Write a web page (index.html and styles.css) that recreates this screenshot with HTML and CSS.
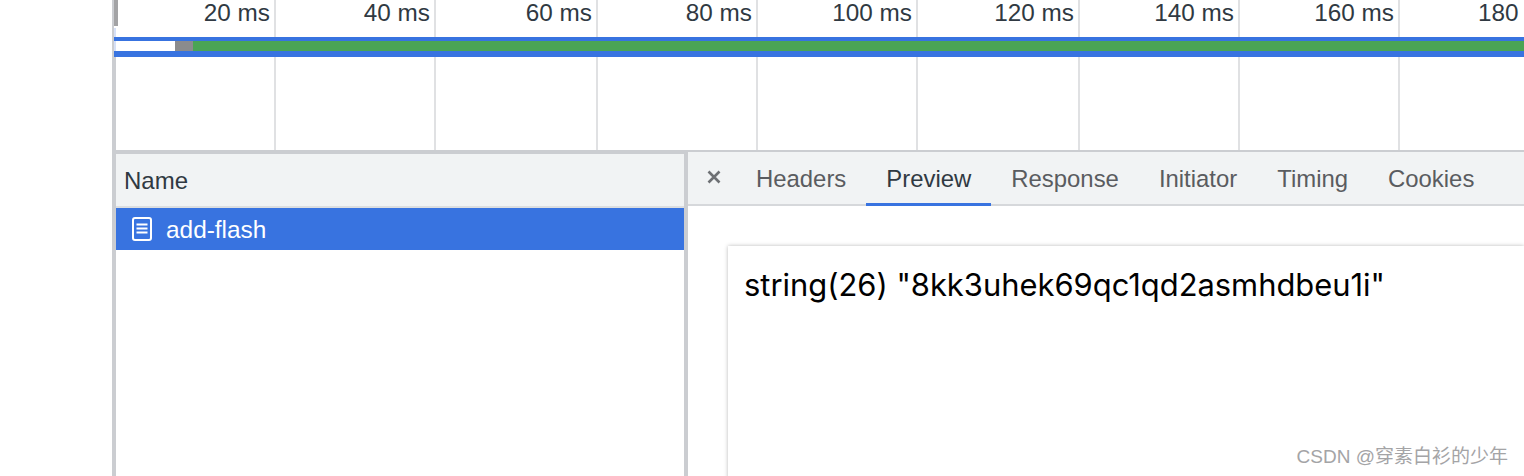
FILE: index.html
```html
<!DOCTYPE html>
<html lang="zh">
<head>
<meta charset="utf-8">
<title>Network</title>
<link rel="stylesheet" href="styles.css">
</head>
<body>
<div class="app">
  <div class="gutter"></div>
  <main class="devtools">
    <section class="overview">
      <div class="ticks ticks-labels">
        <div class="mark"></div>
        <div class="tick first">20 ms</div>
        <div class="tick">40 ms</div>
        <div class="tick wide">60 ms</div>
        <div class="tick">80 ms</div>
        <div class="tick">100 ms</div>
        <div class="tick wide">120 ms</div>
        <div class="tick">140 ms</div>
        <div class="tick">160 ms</div>
        <div class="tick last">180</div>
      </div>
      <div class="bar">
        <div class="bar-wait"></div>
        <div class="bar-gray"></div>
        <div class="bar-green"></div>
      </div>
      <div class="ticks ticks-empty">
        <div class="tick"></div>
        <div class="tick"></div>
        <div class="tick wide"></div>
        <div class="tick"></div>
        <div class="tick"></div>
        <div class="tick wide"></div>
        <div class="tick"></div>
        <div class="tick"></div>
        <div class="tick last"></div>
      </div>
    </section>
    <section class="split">
      <div class="list">
        <div class="list-head">Name</div>
        <div class="list-row">
          <svg class="doc-icon" width="20" height="24" viewBox="0 0 20 24" aria-hidden="true">
            <rect x="1" y="1" width="18" height="22" rx="2" fill="none" stroke="#fff" stroke-width="2"/>
            <path d="M4.500 7.500H15.500M4.500 11.500H15.500M4.500 15.500H15.500" stroke="#fff" stroke-width="2" fill="none"/>
          </svg>
          <span>add-flash</span>
        </div>
      </div>
      <div class="detail">
        <nav class="tabs">
          <svg class="close" width="14" height="14" viewBox="0 0 14 14" aria-hidden="true">
            <path d="M1.500 1.500L12.500 12.500M12.500 1.500L1.500 12.500" stroke="#6e7074" stroke-width="2.600" fill="none"/>
          </svg>
          <a class="tab">Headers</a>
          <a class="tab active">Preview</a>
          <a class="tab">Response</a>
          <a class="tab">Initiator</a>
          <a class="tab">Timing</a>
          <a class="tab">Cookies</a>
        </nav>
        <div class="preview">
          <div class="card">string(26) "8kk3uhek69qc1qd2asmhdbeu1i"</div>
        </div>
      </div>
    </section>
  </main>
</div>
<div class="watermark">CSDN @穿素白衫的少年</div>
</body>
</html>
```

FILE: styles.css
```css
* { box-sizing: border-box; }
html, body {
  margin: 0;
  height: 476px;
  overflow: hidden;
  background: #fff;
  font-family: "Liberation Sans", Arial, "Noto Sans CJK SC", sans-serif;
}
.app { display: flex; width: 1524px; height: 476px; }
.gutter { flex: 0 0 112px; }
.devtools {
  flex: 1;
  min-width: 0;
  display: flex;
  flex-direction: column;
  border-left: 2px solid #cbcdd1;
}
.overview { flex: 0 0 150px; display: flex; flex-direction: column; overflow: hidden; }
.ticks { display: flex; }
.ticks-labels {
  flex: 0 0 37px;
  background: linear-gradient(#d6e0f6, #d6e0f6) 0 28px / 2px 9px no-repeat;
}
.ticks-empty { flex: 1; border-left: 2px solid #cbcdd1; }
.mark { flex: 0 0 4px; height: 26px; background: #a3a3a5; }
.tick {
  flex: 0 0 160px;
  border-right: 2px solid #e0e1e3;
  padding: 0 4px 0 0;
  text-align: right;
  font-size: 24.3px;
  line-height: 26px;
  color: #303942;
  white-space: nowrap;
}
.tick.first { flex-basis: 158px; }
.tick.wide { flex-basis: 162px; }
.tick.last { flex: 1; border-right: 0; text-align: left; padding-left: 78px; }
.bar {
  flex: 0 0 20px;
  display: flex;
  border-top: 4px solid #3873e0;
  border-bottom: 6px solid #3873e0;
}
.bar-wait { flex: 0 0 61px; background: #fff; border-left: 2px solid #d6e0f6; }
.bar-gray { flex: 0 0 18px; background: #8b8b8d; }
.bar-green { flex: 1; background: #4aa454; }
.split { flex: 1; display: flex; min-height: 0; border-top: 2px solid #cbcdd1; }
.list { flex: 0 0 570px; background: #fff; border-left: 2px solid #cbcdd1; }
.list-head {
  height: 56px;
  padding: 13px 0 0 8px;
  background: #f1f3f4;
  border-top: 2px solid #cbcdd1;
  border-bottom: 2px solid #dcdee0;
  font-size: 24px;
  line-height: 28px;
  color: #303942;
}
.list-row {
  height: 42px;
  display: flex;
  align-items: center;
  gap: 14px;
  padding: 1px 0 0 16px;
  background: #3873e0;
  color: #fff;
  font-size: 24.4px;
}
.doc-icon { flex: none; margin-top: -1px; }
.detail {
  flex: 1;
  min-width: 0;
  display: flex;
  flex-direction: column;
  border-left: 4px solid #cbcdd1;
}
.tabs {
  flex: 0 0 54px;
  display: flex;
  align-items: stretch;
  padding-left: 19px;
  background: #f1f3f4;
  border-bottom: 2px solid #d6d8db;
}
.close { flex: none; align-self: center; margin: -2px 15px 0 0; }
.tab {
  padding: 14px 20px 0;
  font-size: 23.9px;
  line-height: 26px;
  color: #5a5c60;
  white-space: nowrap;
}
.tab.active {
  color: #303942;
  margin-bottom: -2px;
  border-bottom: 3px solid #3873e0;
}
.preview { flex: 1; padding: 40px 0 0 40px; overflow: hidden; min-height: 0; }
.card {
  height: 300px;
  padding: 22px 16px;
  background: #fff;
  box-shadow: 0 0 4px rgba(0, 0, 0, .28);
  font-family: Inter, "Liberation Sans", sans-serif;
  font-size: 30.9px;
  line-height: 34px;
  color: #000;
  white-space: nowrap;
}
.watermark {
  position: absolute;
  right: 16px;
  top: 446px;
  font-size: 19px;
  line-height: 22px;
  color: #a4a4a6;
  white-space: nowrap;
}
```
